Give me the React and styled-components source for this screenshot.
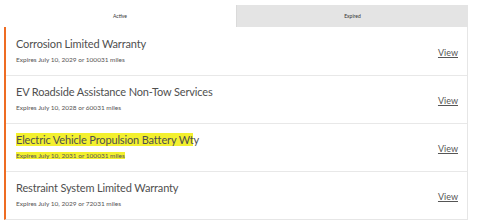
import React from 'react'
import styled, { createGlobalStyle } from 'styled-components'

const Global = createGlobalStyle`
  body {
    margin: 0;
    background: #ffffff;
    font-family: Lato, "Open Sans", sans-serif;
  }
`

const Pagina = styled.div`
  width: 480px;
  height: 223px;
  padding: 5px 12px 0 4px;
  box-sizing: border-box;
`

const Pestanas = styled.div`
  display: grid;
  grid-template-columns: 1fr 1fr;
  height: 22px;
`

const Pestana = styled.div`
  display: flex;
  align-items: center;
  justify-content: center;
  font-size: 5px;
  color: #333;
  background: ${p => (p.activa ? '#ffffff' : '#e4e4e4')};
  border-left: ${p => (p.activa ? 'none' : '1px solid #dadada')};
`

const Lista = styled.div`
  border-left: 2px solid #ee6c23;
  border-right: 1px solid #e6e6e6;
  border-bottom: 1px solid #e6e6e6;
`

const Fila = styled.div`
  display: flex;
  align-items: center;
  justify-content: space-between;
  height: 48px;
  padding: 0 9px 0 10px;
  box-sizing: border-box;
  border-top: ${p => (p.primera ? 'none' : '1px solid #e8e8e8')};
`

const Textos = styled.div`
  display: flex;
  flex-direction: column;
  gap: 6px;
  margin-top: -1px;
`

const Titulo = styled.div`
  font-size: 11px;
  line-height: 12px;
  color: #4f4f4f;
  letter-spacing: -0.15px;
`

const Subtitulo = styled.div`
  font-size: 6.5px;
  line-height: 8px;
  color: #555;
`

const Resaltado = styled.span`
  background: #f3f02e;
`

const Enlace = styled.a`
  font-size: 9px;
  color: #555;
  text-decoration: underline;
  margin-top: 2px;
`

const garantias = [
  { titulo: 'Corrosion Limited Warranty', sub: 'Expires July 10, 2029 or 100031 miles' },
  { titulo: 'EV Roadside Assistance Non-Tow Services', sub: 'Expires July 10, 2028 or 60031 miles' },
  { titulo: 'Electric Vehicle Propulsion Battery Wty', sub: 'Expires July 10, 2031 or 100031 miles', marcado: true },
  { titulo: 'Restraint System Limited Warranty', sub: 'Expires July 10, 2029 or 72031 miles' },
]

function App() {
  return (
    <>
      <Global />
      <Pagina>
        <Pestanas>
          <Pestana activa>Active</Pestana>
          <Pestana>Expired</Pestana>
        </Pestanas>
        <Lista>
          {garantias.map((g, i) => (
            <Fila key={g.titulo} primera={i === 0}>
              <Textos>
                {g.marcado ? (
                  <>
                    <Titulo><Resaltado>{g.titulo.slice(0, -1)}</Resaltado>{g.titulo.slice(-1)}</Titulo>
                    <Subtitulo><Resaltado>{g.sub}</Resaltado></Subtitulo>
                  </>
                ) : (
                  <>
                    <Titulo>{g.titulo}</Titulo>
                    <Subtitulo>{g.sub}</Subtitulo>
                  </>
                )}
              </Textos>
              <Enlace>View</Enlace>
            </Fila>
          ))}
        </Lista>
      </Pagina>
    </>
  )
}

export default App
